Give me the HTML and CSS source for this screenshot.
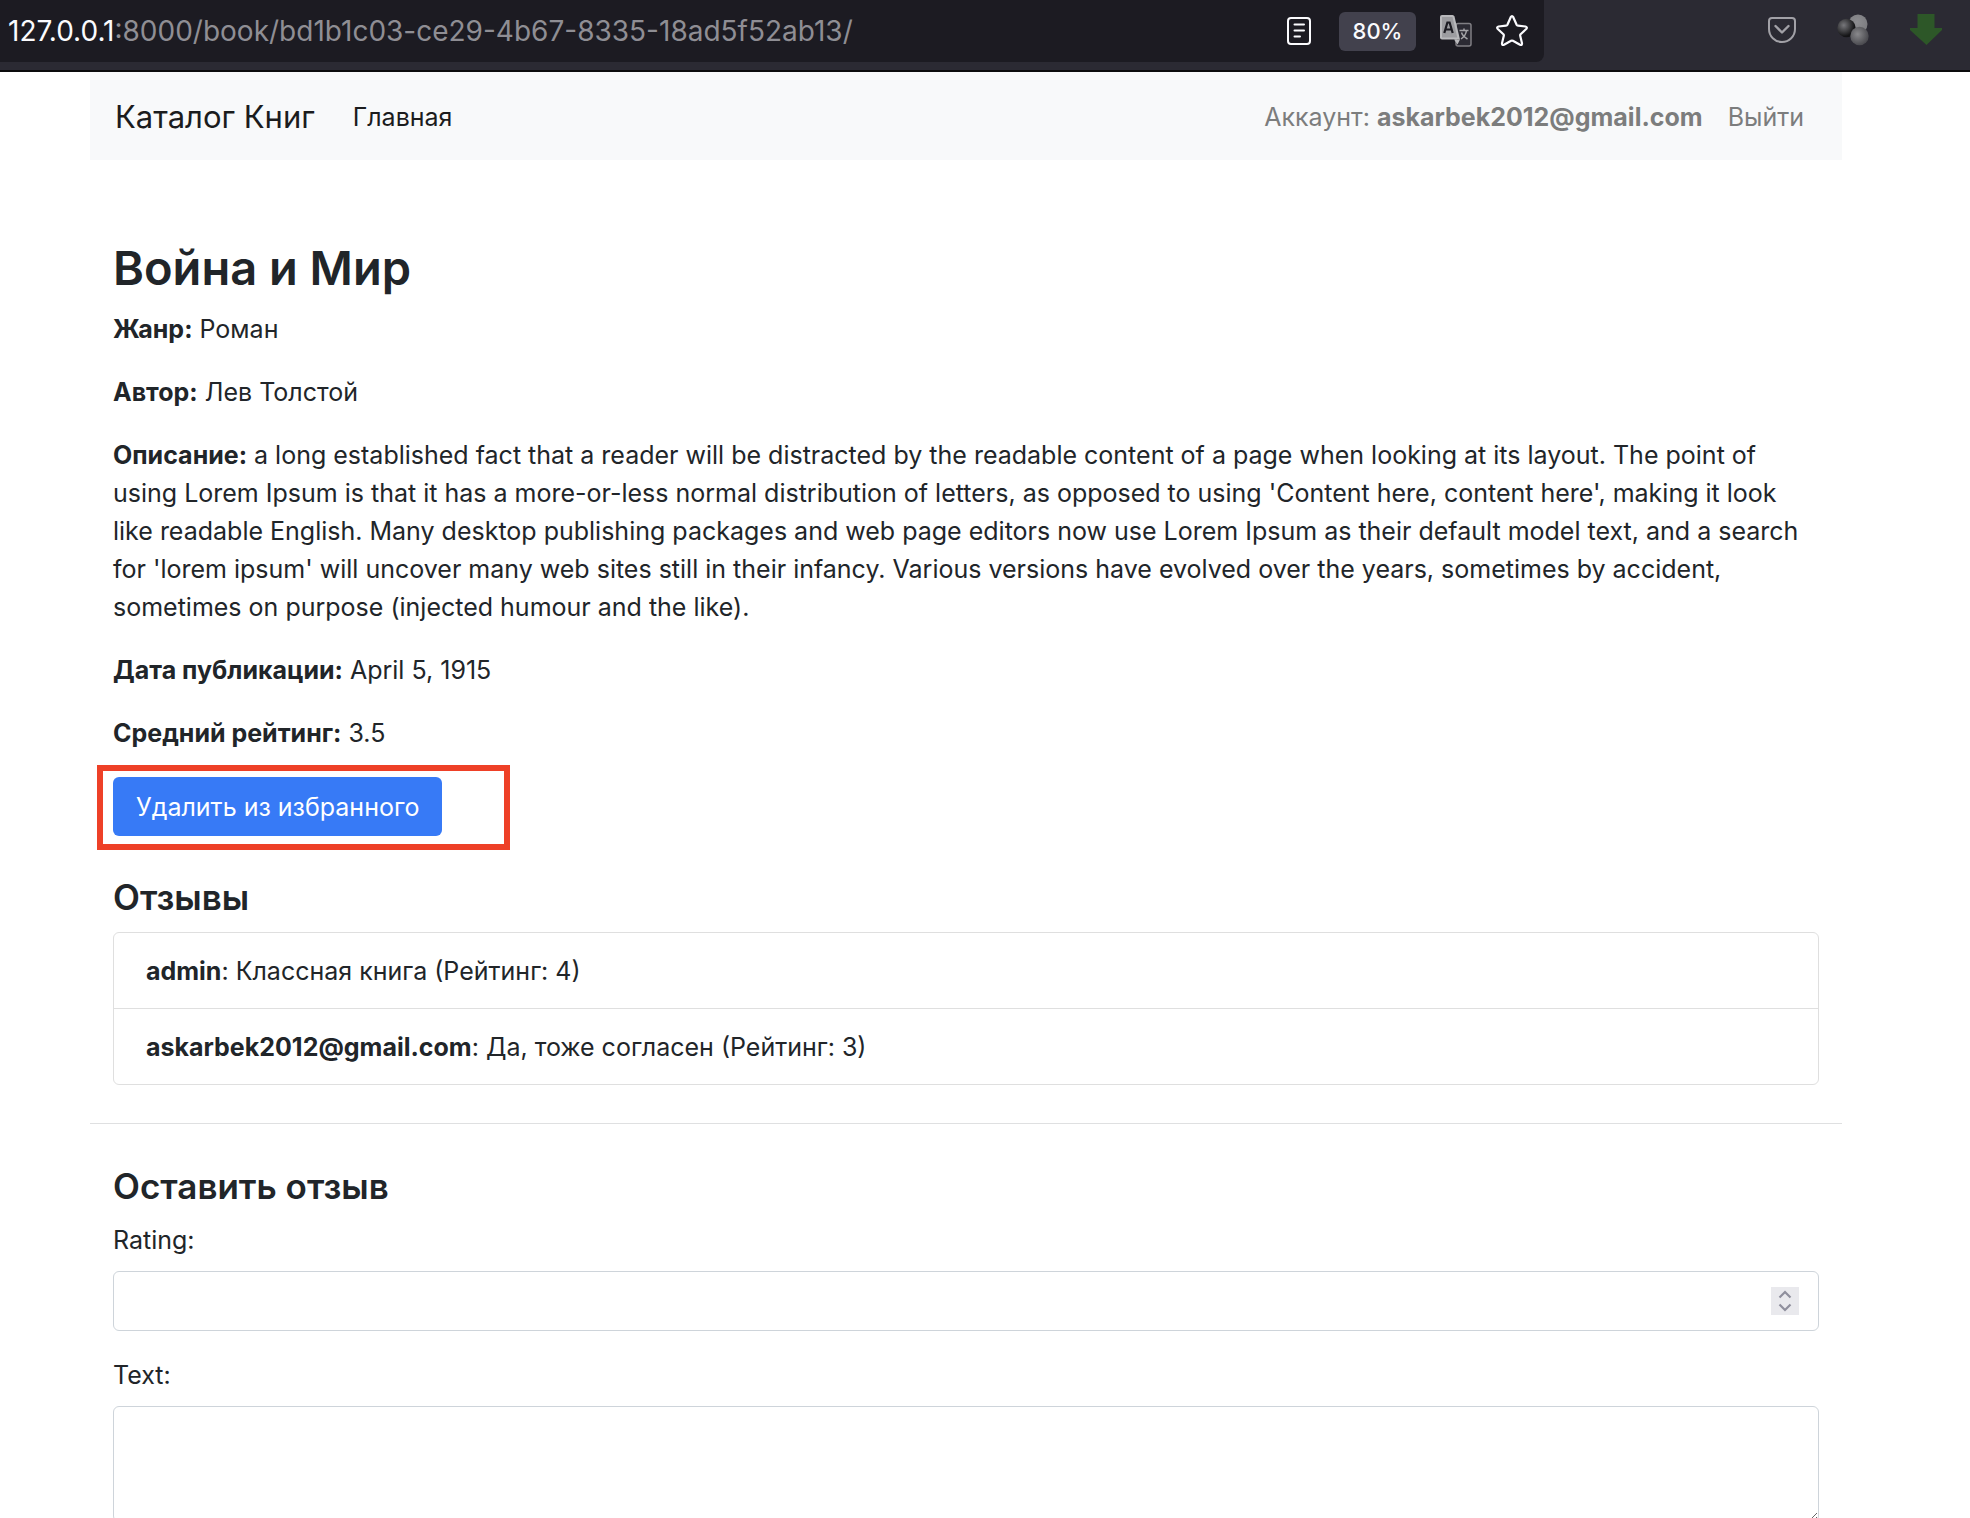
FILE: index.html
```html
<!DOCTYPE html>
<html lang="ru">
<head>
<meta charset="utf-8">
<title>Война и Мир</title>
<link rel="stylesheet" href="styles.css">
</head>
<body>
<div class="toolbar">
  <div class="urlbar">
    <div class="url"><span class="url-host">127.0.0.1</span>:8000/book/bd1b1c03-ce29-4b67-8335-18ad5f52ab13/</div>
    <button class="tool" type="button" aria-label="Reader view">
      <svg width="24" height="28" viewBox="0 0 24 28" fill="none" stroke="#fbfbfe" stroke-width="2" stroke-linecap="round"><rect x="1" y="1" width="22" height="26" rx="3"/><path d="M7.500 7.500H17M7.500 13.500H17M7.500 19.500H13"/></svg>
    </button>
    <button class="zoom" type="button">80%</button>
    <button class="tool" type="button" aria-label="Translate">
      <svg width="32" height="32" viewBox="0 0 32 32"><rect x="16" y="8.500" width="15" height="22.500" rx="2" fill="#2b2a33" stroke="#807f84" stroke-width="1.500"/><path d="M19.500 15.500h9M24 13.500v2M21 24c3-2 5-5 5.500-8.500M21.500 17.500c1 3 3.500 5 6 6.500" fill="none" stroke="#a5a5a8" stroke-width="1.500"/><path d="M14 24.500h6l-2.500 5z" fill="#b9b9bc"/><path d="M2 0h10.500q1.500 0 2 1.500l5.500 23H2q-2 0-2-2V2q0-2 2-2z" fill="#b9b9bc"/><path d="M2 2h10.500l4.800 20.500H2z" fill="#9c9ca0"/><path d="M4.300 18L7.400 7.500h2.200L12.700 18M5.600 14.500h5.800" fill="none" stroke="#1c1b22" stroke-width="2.200"/></svg>
    </button>
    <button class="tool" type="button" aria-label="Bookmark">
      <svg width="32" height="32" viewBox="0 0 32 32" fill="none" stroke="#fbfbfe" stroke-width="2.200" stroke-linejoin="round"><path d="M14.700 2.200Q16 0.200 17.300 2.200L20.600 9.700Q21 10.500 22 10.600L29.500 11.500Q31.800 12.200 30.200 14L24.600 19.200Q24 19.900 24.200 20.700L26 28.200Q26.200 30.600 24 29.800L16.900 25.800Q16 25.300 15.100 25.800L8 29.800Q5.800 30.600 6 28.200L7.800 20.700Q8 19.900 7.400 19.200L1.800 14Q0.200 12.200 2.500 11.500L10 10.600Q11 10.500 11.400 9.700Z"/></svg>
    </button>
  </div>
  <div class="extensions">
    <button class="tool" type="button" aria-label="Pocket">
      <svg width="28" height="26" viewBox="0 0 28 26" fill="none" stroke="#a2a1a7" stroke-width="2"><path d="M4 1h20q3 0 3 3v8a13 13 0 0 1-26 0V4q0-3 3-3z"/><path d="M7.500 9l6.500 6.500L20.500 9" stroke-width="2.400" stroke-linecap="round" stroke-linejoin="round"/></svg>
    </button>
    <button class="tool" type="button" aria-label="Containers">
      <svg width="32" height="32" viewBox="0 0 32 32"><defs><radialGradient id="dark" cx=".35" cy=".35" r=".6"><stop offset="0" stop-color="#77777b"/><stop offset="1" stop-color="#141416"/></radialGradient><radialGradient id="mid" cx=".4" cy=".4" r=".6"><stop offset="0" stop-color="#89898c"/><stop offset="1" stop-color="#4b4b50"/></radialGradient><radialGradient id="light" cx=".45" cy=".4" r=".6"><stop offset="0" stop-color="#8d8d91"/><stop offset="1" stop-color="#7c7c80"/></radialGradient></defs><circle cx="21" cy="10" r="9.500" fill="url(#light)"/><circle cx="9.500" cy="14" r="9.200" fill="url(#dark)"/><circle cx="22.500" cy="22" r="9.200" fill="url(#mid)"/></svg>
    </button>
    <button class="tool" type="button" aria-label="Downloads">
      <svg width="32" height="32" viewBox="0 0 32 32"><path d="M7.500 0h17v14H32v2L16.500 31 0 16v-2h7.500z" fill="#2d5728"/></svg>
    </button>
  </div>
</div>
<div class="container">
  <nav class="navbar">
    <a class="brand" href="#">Каталог Книг</a>
    <a class="nav-link active" href="#">Главная</a>
    <a class="nav-link account" href="#">Аккаунт: <strong>askarbek2012@gmail.com</strong></a>
    <a class="nav-link" href="#">Выйти</a>
  </nav>
  <main class="book">
    <h1>Война и Мир</h1>
    <p><strong>Жанр:</strong> Роман</p>
    <p><strong>Автор:</strong> Лев Толстой</p>
    <p><strong>Описание:</strong> a long established fact that a reader will be distracted by the readable content of a page when looking at its layout. The point of using Lorem Ipsum is that it has a more-or-less normal distribution of letters, as opposed to using 'Content here, content here', making it look like readable English. Many desktop publishing packages and web page editors now use Lorem Ipsum as their default model text, and a search for 'lorem ipsum' will uncover many web sites still in their infancy. Various versions have evolved over the years, sometimes by accident, sometimes on purpose (injected humour and the like).</p>
    <p><strong>Дата публикации:</strong> April 5, 1915</p>
    <p><strong>Средний рейтинг:</strong> 3.5</p>
    <div class="favorite"><button class="btn" type="button">Удалить из избранного</button></div>
    <h2>Отзывы</h2>
    <ul class="reviews">
      <li><strong>admin</strong>: Классная книга (Рейтинг: 4)</li>
      <li><strong>askarbek2012@gmail.com</strong>: Да, тоже согласен (Рейтинг: 3)</li>
    </ul>
  </main>
  <hr>
  <form class="review-form">
    <h2>Оставить отзыв</h2>
    <label for="rating">Rating:</label>
    <div class="number">
      <input id="rating" class="field" type="number">
      <svg class="spinner" width="28" height="28" viewBox="0 0 28 28" fill="none" stroke="#8f8f9d" stroke-width="2.200"><path d="M8.500 10.500L14 5l5.500 5.500M8.500 17.500L14 23l5.500-5.500"/></svg>
    </div>
    <label for="text">Text:</label>
    <textarea id="text" class="field"></textarea>
  </form>
</div>
</body>
</html>
```

FILE: styles.css
```css
* {
  box-sizing: border-box;
}

body {
  margin: 0;
  height: 100vh;
  overflow: hidden;
  background: #fff;
  color: #212529;
  font: 25px/38px Inter, "Liberation Sans", sans-serif;
}

button,
input,
textarea {
  font: inherit;
}

a {
  color: inherit;
  text-decoration: none;
}

strong {
  font-weight: 700;
}

/* Browser toolbar */

.toolbar {
  display: flex;
  justify-content: space-between;
  height: 72px;
  padding-bottom: 8px;
  background: #2b2a33;
  border-bottom: 2px solid #0c0c0d;
}

.urlbar {
  display: flex;
  align-items: center;
  flex: 0 1 1544px;
  padding: 0 16px 0 8px;
  background: #1c1b22;
  border-radius: 0 0 8px 0;
}

.url {
  flex: 1;
  color: #8f8e94;
  font-size: 28px;
}

.url-host {
  color: #fbfbfe;
}

.tool {
  display: flex;
  padding: 0;
  border: 0;
  background: none;
}

.zoom {
  width: 77px;
  height: 39px;
  margin: 0 24px 0 28px;
  padding: 0;
  border: 0;
  border-radius: 6px;
  background: #42414d;
  color: #fbfbfe;
  font-size: 22px;
  font-weight: 500;
}

.zoom + .tool {
  margin-right: 24px;
}

.extensions {
  display: flex;
  align-items: center;
  gap: 41px;
  padding: 0 28px 2px 0;
}

/* Page */

.container {
  margin: 0 128px 0 90px;
}

.navbar {
  display: flex;
  align-items: center;
  height: 88px;
  padding: 2px 38px 0 25px;
  background: #f8f9fa;
}

.brand {
  margin-right: 38px;
  color: #1b1c1d;
  font-size: 31px;
}

.nav-link {
  color: #7c7d7d;
}

.nav-link.active {
  color: #1b1c1d;
}

.account {
  margin: 0 25px 0 auto;
}

.book {
  padding: 78px 23px 0;
}

h1,
h2 {
  margin: 0 0 12px;
  font-weight: 600;
}

h1 {
  font-size: 47px;
  line-height: 60px;
}

h2 {
  font-size: 35px;
  line-height: 46px;
}

p {
  margin: 0 0 25px;
}

.favorite {
  display: flex;
  width: 413px;
  margin: -12px 0 24px -16px;
  padding: 6px 10px 8px;
  border: 6px solid #ee4027;
}

.btn {
  height: 59px;
  padding: 0 23px;
  border: 0;
  border-radius: 6px;
  background: #377af6;
  color: #fff;
}

.reviews {
  margin: 0;
  padding: 0;
  border: 1px solid #dfdfdf;
  border-radius: 6px;
  list-style: none;
}

.reviews li {
  padding: 19px 32px 18px;
}

.reviews li + li {
  border-top: 1px solid #dfdfdf;
}

hr {
  margin: 38px 0 39px;
  border: 0;
  border-top: 1px solid #dfe0e1;
}

.review-form {
  padding: 0 23px;
}

label {
  display: block;
  margin-bottom: 12px;
}

.number {
  display: grid;
  align-items: center;
  margin-bottom: 25px;
}

.field {
  display: block;
  width: 100%;
  height: 60px;
  padding: 10px 19px;
  border: 1px solid #ced4da;
  border-radius: 6px;
  background: #fff;
}

.number .field,
.spinner {
  grid-area: 1 / 1;
}

.number .field {
  appearance: textfield;
}

.spinner {
  justify-self: end;
  margin-right: 20px;
  background: #e9e9ed;
}

textarea.field {
  height: 116px;
  resize: vertical;
}
```
